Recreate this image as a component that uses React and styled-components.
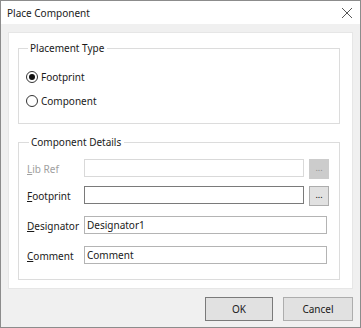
import styled, { createGlobalStyle } from "styled-components";

const GlobalStyle = createGlobalStyle`
  html, body {
    margin: 0;
    padding: 0;
    background: #f0f0f0;
  }
  body {
    font-family: "Noto Sans", "Open Sans", sans-serif;
    font-size: 10px;
    color: #1a1a1a;
  }
`;

const Window = styled.div`
  width: 361px;
  height: 328px;
  box-sizing: border-box;
  border: 1px solid #8c8c8c;
  background: #f0f0f0;
  display: flex;
  flex-direction: column;
`;

const TitleBar = styled.div`
  height: 23px;
  background: #fff;
  display: flex;
  align-items: center;
  justify-content: space-between;
  padding: 0 7px 0 6px;
`;

const CloseIcon = () => (
  <svg width="12" height="12" viewBox="0 0 12 12">
    <path d="M1 1 L11 11 M11 1 L1 11" stroke="#444" strokeWidth="0.9" fill="none" />
  </svg>
);

const Body = styled.div`
  flex: 1;
  display: flex;
  flex-direction: column;
  padding: 8px 7px 5px 7px;
`;

const Panel = styled.div`
  height: 257px;
  box-sizing: border-box;
  background: #fff;
  border: 1px solid #e6e6e6;
  padding: 7px 12px 10px 9px;
  display: flex;
  flex-direction: column;
  gap: 10px;
`;

const Group = styled.fieldset`
  margin: 0;
  border: 1px solid #dcdcdc;
  padding: ${(p) => p.$pad};
  min-width: 0;
  display: flex;
  flex-direction: column;
  gap: ${(p) => p.$gap}px;
`;

const Legend = styled.legend`
  margin-left: 2px;
  padding: 0 3px 0 2px;
  line-height: 16px;
`;

const RadioRow = styled.label`
  display: flex;
  align-items: center;
  gap: 3px;
  height: 16px;
`;

const RadioCircle = styled.span`
  width: 12px;
  height: 12px;
  border-radius: 50%;
  border: 1px solid #333;
  box-sizing: border-box;
  display: flex;
  align-items: center;
  justify-content: center;
  &::after {
    content: "";
    width: 6px;
    height: 6px;
    border-radius: 50%;
    background: ${(p) => (p.$checked ? "#111" : "transparent")};
  }
`;

const FieldRow = styled.div`
  display: grid;
  grid-template-columns: 57px 1fr auto;
  align-items: start;
  height: ${(p) => p.$h}px;
`;

const FieldLabel = styled.span`
  line-height: 20px;
  white-space: nowrap;
  color: ${(p) => (p.$disabled ? "#a0a0a0" : "#1a1a1a")};
`;

const Input = styled.div`
  height: 18px;
  box-sizing: border-box;
  border: 1px solid ${(p) => (p.$disabled ? "#d9d9d9" : p.$focus ? "#7a7a7a" : "#b4b4b4")};
  background: #fff;
  padding: 0 2px;
  line-height: 16px;
  margin-right: ${(p) => (p.$wide ? "2px" : "0")};
`;

const Browse = styled.div`
  width: 20px;
  height: 20px;
  margin-left: 5px;
  box-sizing: border-box;
  border: 1px solid ${(p) => (p.$disabled ? "#cccccc" : "#adadad")};
  background: ${(p) => (p.$disabled ? "#cccccc" : "#e1e1e1")};
  color: ${(p) => (p.$disabled ? "#8d8d8d" : "#000")};
  font-size: 9px;
  line-height: 16px;
  text-align: center;
`;

const ButtonBar = styled.div`
  display: flex;
  justify-content: flex-end;
  gap: 10px;
  padding-top: 8px;
`;

const Button = styled.div`
  width: ${(p) => p.$w}px;
  height: 24px;
  box-sizing: border-box;
  border: 1px solid ${(p) => (p.$default ? "#7a7a7a" : "#adadad")};
  background: #e1e1e1;
  display: flex;
  align-items: center;
  justify-content: center;
`;

const fields = [
  { label: "Lib Ref", disabled: true, browse: true, h: 27 },
  { label: "Footprint", focus: true, browse: true, h: 30 },
  { label: "Designator", value: "Designator1", h: 30 },
  { label: "Comment", value: "Comment", h: 18 },
];

const Field = ({ label, disabled, browse, focus, value, h }) => (
  <FieldRow $h={h}>
    <FieldLabel $disabled={disabled}>
      <u>{label[0]}</u>
      {label.slice(1)}
    </FieldLabel>
    <Input $disabled={disabled} $focus={focus} $wide={!browse}>
      {value}
    </Input>
    {browse && <Browse $disabled={disabled}>...</Browse>}
  </FieldRow>
);

export default function App() {
  return (
    <>
      <GlobalStyle />
      <Window>
        <TitleBar>
          <span>Place Component</span>
          <CloseIcon />
        </TitleBar>
        <Body>
          <Panel>
            <Group $pad="13px 0 14px 7px" $gap={8}>
              <Legend>Placement Type</Legend>
              <RadioRow>
                <RadioCircle $checked />
                Footprint
              </RadioRow>
              <RadioRow>
                <RadioCircle />
                Component
              </RadioRow>
            </Group>
            <Group $pad="9px 10px 15px 8px" $gap={0}>
              <Legend>Component Details</Legend>
              {fields.map((f) => (
                <Field key={f.label} {...f} />
              ))}
            </Group>
          </Panel>
          <ButtonBar>
            <Button $w={68} $default>OK</Button>
            <Button $w={70}>Cancel</Button>
          </ButtonBar>
        </Body>
      </Window>
    </>
  );
}
